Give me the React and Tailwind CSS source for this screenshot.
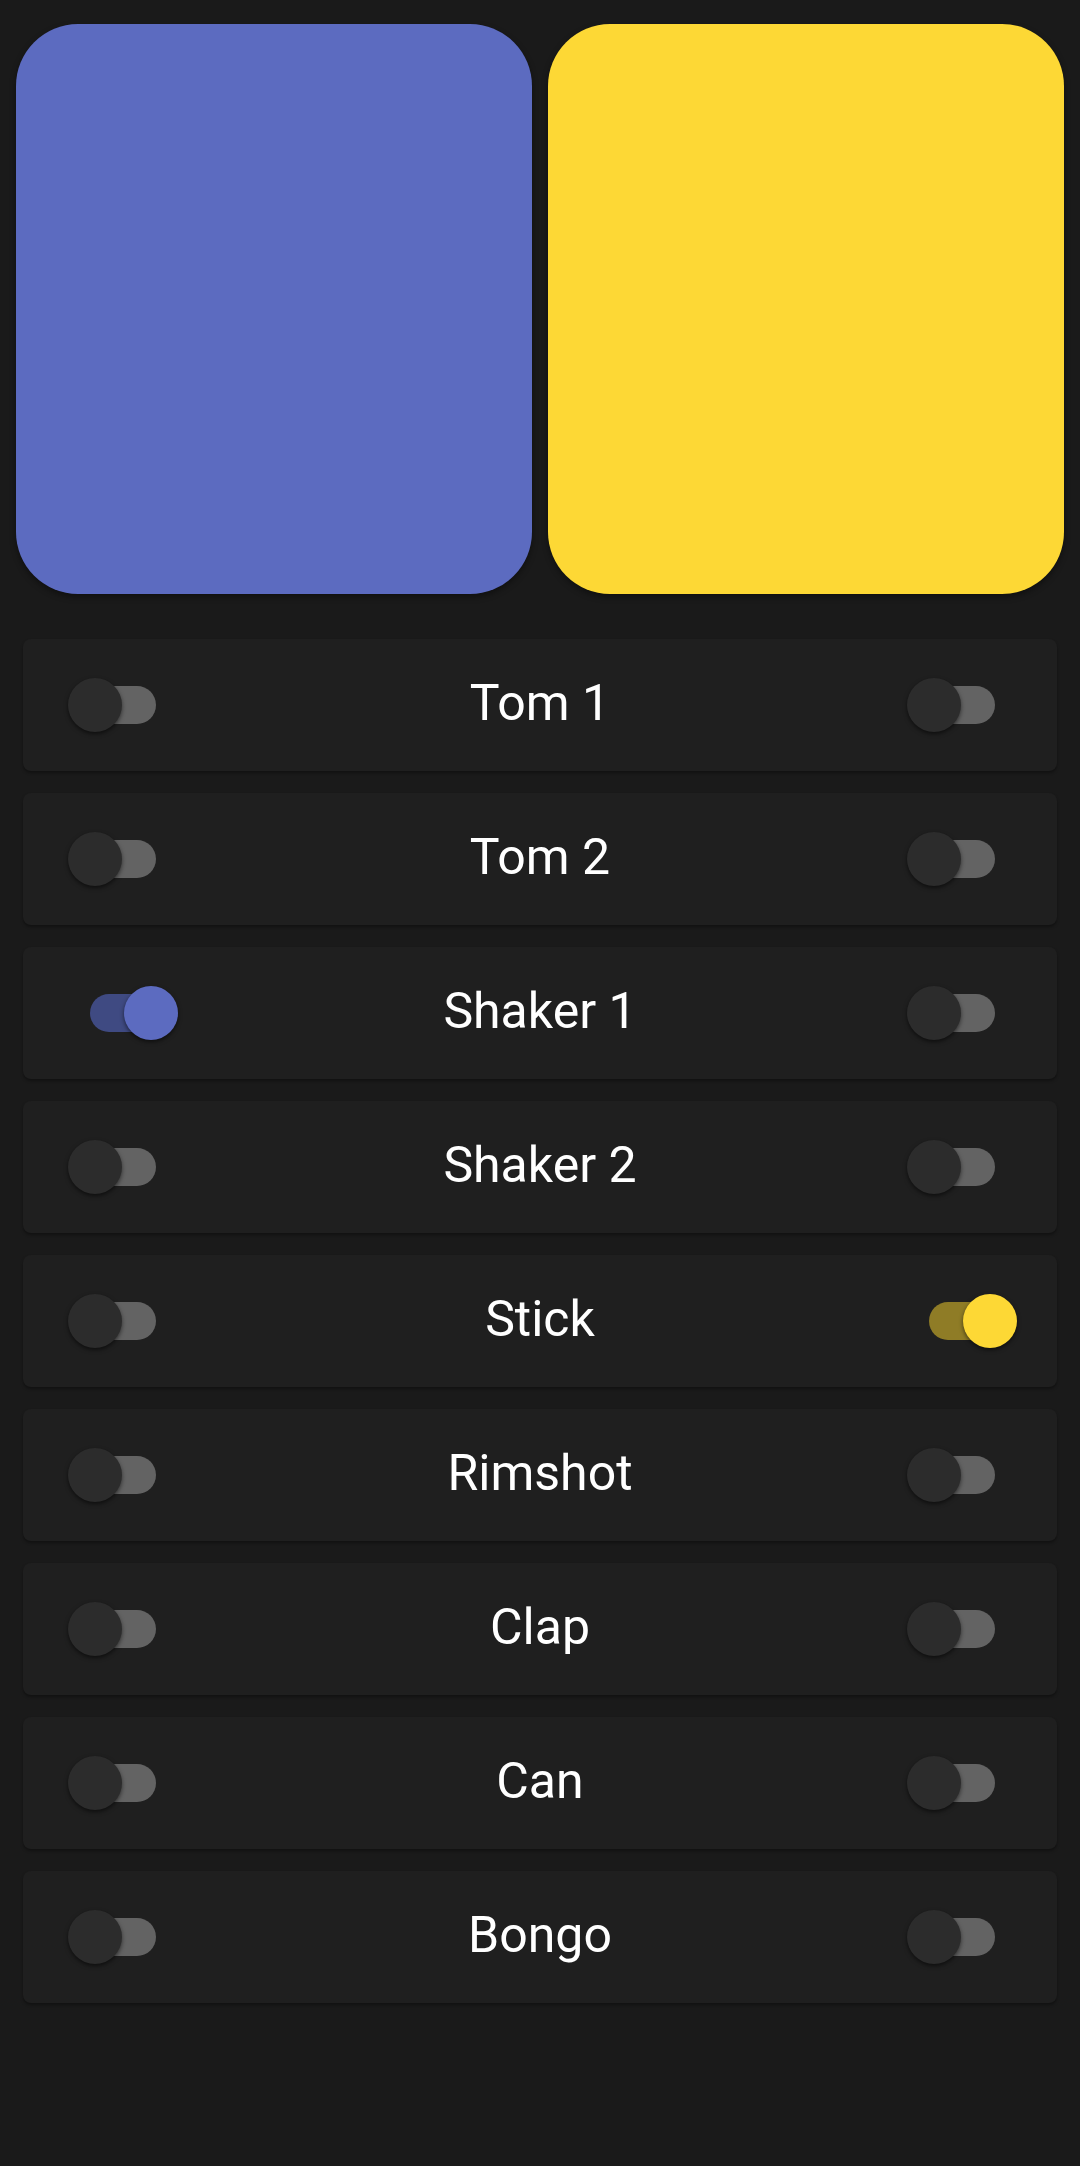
import React, { useState } from 'react'

const ROWS = [
  { name: 'Tom 1', left: false, right: false },
  { name: 'Tom 2', left: false, right: false },
  { name: 'Shaker 1', left: true, right: false },
  { name: 'Shaker 2', left: false, right: false },
  { name: 'Stick', left: false, right: true },
  { name: 'Rimshot', left: false, right: false },
  { name: 'Clap', left: false, right: false },
  { name: 'Can', left: false, right: false },
  { name: 'Bongo', left: false, right: false },
]

const Switch = ({ on, color, onToggle }) => {
  const track = on ? (color === 'blue' ? 'bg-[#3f4a82]' : 'bg-[#8f7c26]') : 'bg-[#636363]'
  const thumb = on ? (color === 'blue' ? 'bg-[#5c6bc0]' : 'bg-[#fdd835]') : 'bg-[#2c2c2c]'
  return (
    <button onClick={onToggle} className="relative w-[110px] h-[54px] shrink-0">
      <span className={`absolute left-[22px] top-[8px] w-[66px] h-[38px] rounded-full ${track}`} />
      <span
        className={`absolute top-0 w-[54px] h-[54px] rounded-full shadow-[0_2px_4px_rgba(0,0,0,0.55)] ${thumb} ${on ? 'left-[56px]' : 'left-0'}`}
      />
    </button>
  )
}

export default function App() {
  const [rows, setRows] = useState(ROWS)

  const toggle = (i, side) => {
    setRows(rows.map((r, j) => (j === i ? { ...r, [side]: !r[side] } : r)))
  }

  return (
    <div className="min-h-[2166px] bg-[#1a1a1a] font-['Roboto',sans-serif] text-white">
      {/* Pads */}
      <div className="flex gap-4 px-4 pt-6">
        <div className="flex-1 h-[570px] rounded-[62px] bg-[#5c6bc0] shadow-[0_3px_6px_rgba(0,0,0,0.4)]" />
        <div className="flex-1 h-[570px] rounded-[62px] bg-[#fdd835] shadow-[0_3px_6px_rgba(0,0,0,0.4)]" />
      </div>

      {/* Sound rows */}
      <div className="flex flex-col gap-[22px] mt-[45px] mx-[23px]">
        {rows.map((r, i) => (
          <div
            key={r.name}
            className="flex items-center h-[132px] pl-[45px] pr-[40px] rounded-[8px] bg-[#1f1f1f] shadow-[0_2px_3px_rgba(0,0,0,0.35)]"
          >
            <Switch on={r.left} color="blue" onToggle={() => toggle(i, 'left')} />
            <div className="flex-1 pr-[5px] pb-[5px] text-center text-[50px] leading-none">{r.name}</div>
            <Switch on={r.right} color="yellow" onToggle={() => toggle(i, 'right')} />
          </div>
        ))}
      </div>
    </div>
  )
}
